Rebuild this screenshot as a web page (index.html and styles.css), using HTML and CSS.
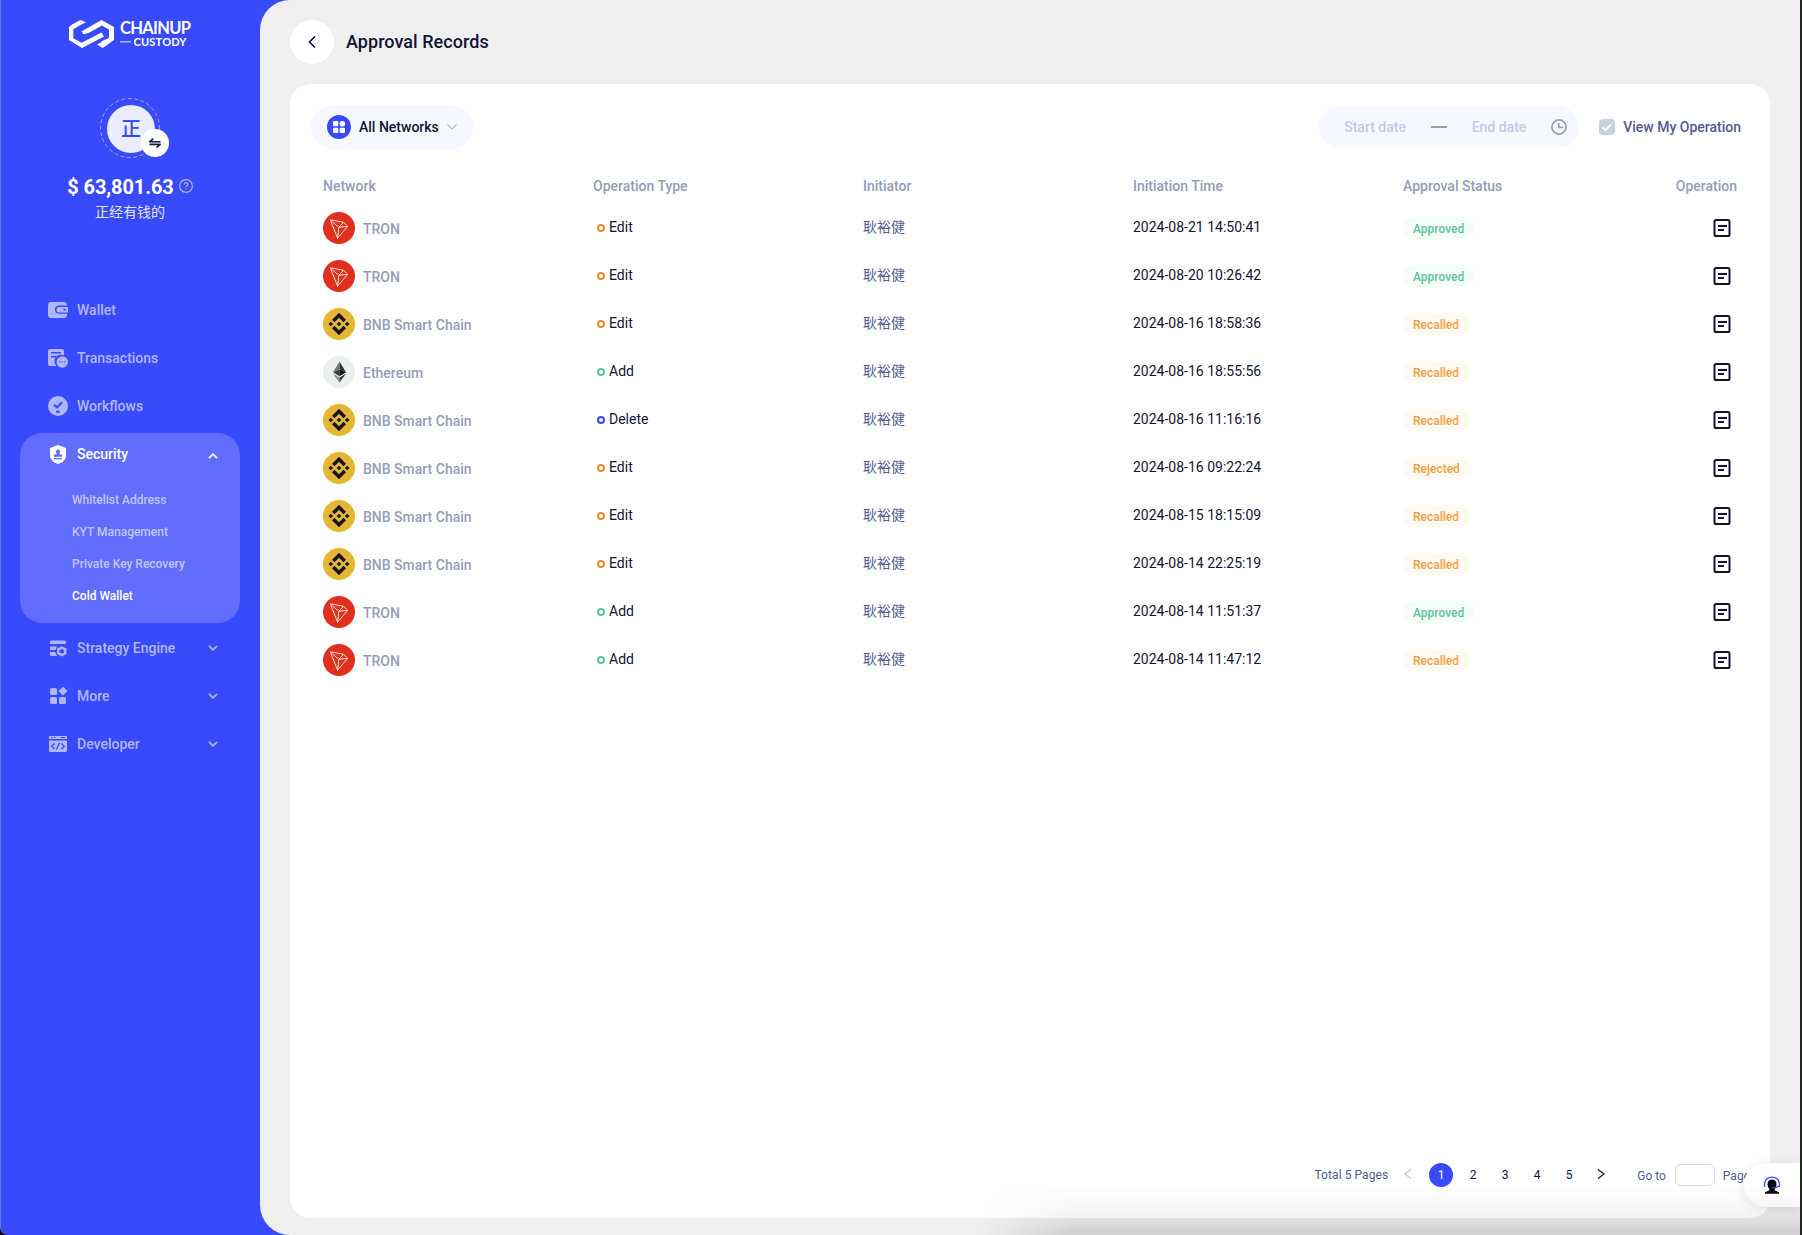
FILE: index.html
```html
<!DOCTYPE html>
<html lang="en">
<head>
<meta charset="utf-8">
<title>Approval Records</title>
<link rel="stylesheet" href="styles.css">
</head>
<body>
<svg class="defs" width="0" height="0" aria-hidden="true">
  <symbol id="tron" viewBox="0 0 32 32"><circle cx="16" cy="16" r="16" fill="#e1301e"/><path d="M7.3 7.8 20.6 10.3 24.7 14.3 14.6 26.2ZM7.3 7.8 15.8 15.4 14.6 26.2M15.8 15.4 20.6 10.3M15.8 15.4 24.7 14.3" fill="none" stroke="#fbe0dd" stroke-width="1" stroke-linejoin="round"/></symbol>
  <symbol id="bnb" viewBox="0 0 32 32"><circle cx="16" cy="16" r="16" fill="#e3b733"/><g fill="#16171a"><path d="M16 4.8 23 11.8 20.5 14.3 16 9.8 11.5 14.3 9 11.8ZM16 27.2 23 20.2 20.5 17.7 16 22.2 11.5 17.7 9 20.2ZM16 13.7 18.3 16 16 18.3 13.7 16ZM7.8 13.7 10.1 16 7.8 18.3 5.5 16ZM24.2 13.7 26.5 16 24.2 18.3 21.9 16Z"/></g></symbol>
  <symbol id="eth" viewBox="0 0 32 32"><circle cx="16" cy="16" r="16" fill="#eceff0"/><path d="M16.5 5.5 10 16.3 16.5 13.4Z" fill="#777"/><path d="M16.5 5.5 23 16.3 16.5 13.4Z" fill="#333"/><path d="M10 16.3 16.5 13.4V20.2Z" fill="#393939"/><path d="M23 16.3 16.5 13.4V20.2Z" fill="#141414"/><path d="M10 17.8 16.5 21.6V26.5Z" fill="#888"/><path d="M23 17.8 16.5 21.6V26.5Z" fill="#3c3c3b"/></symbol>
  <symbol id="doc" viewBox="0 0 18 18"><rect x="1.5" y="1" width="15" height="16" rx="1.6" fill="none" stroke="#131337" stroke-width="2"/><path d="M5 7h9M5 11h6" stroke="#131337" stroke-width="2"/></symbol>
  <symbol id="down" viewBox="0 0 10 6"><path d="M1 .8 5 4.8 9 .8" fill="none" stroke="currentColor" stroke-width="1.8"/></symbol>
</svg>
<div class="app">
  <aside class="sidebar">
    <svg class="logo" width="124" height="30" viewBox="0 0 124 30" fill="#fff">
      <path d="M4.5 5.2 10 2.3 15 4.5 5.3 10.2V19.2L13.5 23.7 33.5 13.5 36 17.5 14 29 1 21V8Z"/>
      <path d="M13 1 18 3.5 15 4.8 9.5 2.3Z"/>
      <path d="M13.5 12.5 33.5 1 46 8V21L39.5 25.5 33 22.5 41 19V10.5L34 6.5 20.5 14 15.5 15.2Z"/>
      <path d="M29 25.5 35 22.5 40 25.5 34.5 29Z"/>
      <text class="logo-name" x="52" y="15" textLength="71">CHAINUP</text>
      <path d="M52 22h11v1.500H52Z" opacity=".6"/>
      <text class="logo-sub" x="65.500" y="27" textLength="53">CUSTODY</text>
    </svg>
    <div class="avatar">
      <svg class="ring" width="60" height="60"><circle cx="30" cy="30" r="29.500" fill="none" stroke="#a5adff" stroke-dasharray="4 2.500"/></svg>
      <span class="face">正</span>
      <span class="swap"><svg width="12" height="10" viewBox="0 0 12 10"><path d="M0 3.800h11.500M4.300 .600.800 3.800M.500 6.400H11.800M7.500 9.400 11.300 6.400" fill="none" stroke="#171a3a" stroke-width="1.600"/></svg></span>
    </div>
    <div class="balance"><b>$ 63,801.63</b><svg width="14" height="14" viewBox="0 0 14 14" fill="none" stroke="#b3b5d6" stroke-width="1.200"><circle cx="7" cy="7" r="6.400"/><path d="M5.200 5.600C5.200 3 8.900 3.100 8.900 5.400 8.900 6.700 7 6.700 7 8.300M7 9.400v1.200"/></svg></div>
    <div class="owner">正经有钱的</div>
    <nav class="menu">
      <a class="item"><svg width="20" height="18" viewBox="0 0 20 18"><path fill="currentColor" fill-rule="evenodd" d="M3 1H16Q19 1 19 4.500H11A4 4 0 0 0 11 12.800H19V14Q19 17 16 17H3Q0 17 0 14V4Q0 1 3 1ZM11 6H20V11.400H11Q8.500 11.400 8.500 8.700 8.500 6 11 6ZM15.500 7.800V9.800H17.500V7.800Z"/></svg>Wallet</a>
      <a class="item"><svg width="20" height="20" viewBox="0 0 20 20"><path fill="currentColor" fill-rule="evenodd" d="M2 1H14Q16 1 16 3V7.500A6.500 6.500 0 0 0 8.500 18H2Q0 18 0 16V3Q0 1 2 1ZM3 4V5.500H13V4ZM3 8V9.500H8.500V8Z"/><circle cx="14.300" cy="14" r="5.700" fill="currentColor"/><path d="M11 14h1.500M13.500 14h1.500M16 14h1.500" stroke="#3949fc"/></svg>Transactions</a>
      <a class="item"><svg width="20" height="20" viewBox="0 0 20 20"><circle cx="10" cy="10" r="10" fill="currentColor"/><path d="M6 8.500 9 11.500 14 6.200M8 15.700h3.800" fill="none" stroke="#3949fc" stroke-width="2"/></svg>Workflows</a>
      <div class="group">
        <a class="item on"><svg width="20" height="20" viewBox="0 0 20 20"><path fill="currentColor" d="M10 1 18 4V12Q18 17 10 20 2 17 2 12V4Z"/><path fill="#5f6dfd" d="M10 5.500a2 2 0 0 1 1.500 3.400V10.500h2.500V12.800H6V10.500H8.500V8.900A2 2 0 0 1 10 5.500ZM6 14h8v1.300H6Z"/></svg>Security<svg class="caret up" width="10" height="6"><use href="#down"/></svg></a>
        <div class="sub"><a>Whitelist Address</a><a>KYT Management</a><a>Private Key Recovery</a><a class="on">Cold Wallet</a></div>
      </div>
      <a class="item"><svg width="20" height="20" viewBox="0 0 20 20"><path fill="currentColor" d="M3.500 2.500H16.500Q18 2.500 18 4V6H2V4Q2 2.500 3.500 2.500ZM2 8.500H9L7.500 12H2ZM2 14H7L9 18H3.500Q2 18 2 16.500Z"/><path fill="none" stroke="currentColor" stroke-width="2.600" d="M13.800 9.600 17.200 11.300V15.300L13.800 17.100 10.300 15.300V11.300Z"/></svg>Strategy Engine<svg class="caret" width="10" height="6"><use href="#down"/></svg></a>
      <a class="item"><svg width="20" height="20" viewBox="0 0 20 20" fill="currentColor"><rect x="2" y="2" width="7" height="7" rx="1.500"/><rect x="2" y="11" width="7" height="7" rx="1.500"/><rect x="11" y="11" width="7" height="7" rx="1.500"/><path d="M15 .500 19.500 5 15 9.500 10.500 5Z"/></svg>More<svg class="caret" width="10" height="6"><use href="#down"/></svg></a>
      <a class="item"><svg width="20" height="20" viewBox="0 0 20 20"><path fill="currentColor" fill-rule="evenodd" d="M2 2H18Q19 2 19 3V5H1V3Q1 2 2 2ZM1 6.500H19V16.500Q19 18 17.500 18H2.500Q1 18 1 16.500ZM3 3V4H4.500V3ZM6 3V4H7.500V3ZM13 3V4H17V3Z"/><path d="M6.500 9.500 3.800 12.200 6.500 15M13.500 9.500 16.200 12.200 13.500 15M11.500 8.800 8.500 15.600" fill="none" stroke="#3949fc" stroke-width="1.300"/></svg>Developer<svg class="caret" width="10" height="6"><use href="#down"/></svg></a>
    </nav>
  </aside>
  <main class="main">
    <header class="head"><span class="back"><svg width="8" height="12" viewBox="0 0 8 12"><path d="M7 .500 1.500 6 7 11.500" fill="none" stroke="#131337" stroke-width="1.600"/></svg></span><h1>Approval Records</h1></header>
    <section class="card">
      <div class="filters">
        <div class="network"><svg width="24" height="24" viewBox="0 0 24 24"><circle cx="12" cy="12" r="12" fill="#3949fc"/><g fill="#fff"><rect x="6" y="6" width="5.300" height="5.300" rx="1"/><rect x="6" y="12.700" width="5.300" height="5.300" rx="1"/><rect x="12.700" y="12.700" width="5.300" height="5.300" rx="1"/><circle cx="15.300" cy="8.700" r="2.800"/></g></svg><span>All Networks</span><svg class="thin" width="10" height="6" viewBox="0 0 10 6"><path d="M.500.500 5 5 9.500.500" fill="none" stroke="#b9bcc8" stroke-width="1.200"/></svg></div>
        <div class="dates"><span>Start date</span><i></i><span>End date</span><svg width="16" height="16" viewBox="0 0 16 16" fill="none" stroke="#969cb7" stroke-width="1.700"><circle cx="8" cy="8" r="7.100"/><path d="M7.800 4V8.300H12"/></svg></div>
        <label class="mine"><svg width="16" height="16" viewBox="0 0 16 16"><rect width="16" height="16" rx="4" fill="#cbd0df"/><path d="M3.500 8.300 6.500 11.200 12 5.400" fill="none" stroke="#fff" stroke-width="2"/></svg>View My Operation</label>
      </div>
      <div class="table">
        <div class="row th"><span>Network</span><span>Operation Type</span><span>Initiator</span><span>Initiation Time</span><span>Approval Status</span><span class="last">Operation</span></div>
        <div class="row"><span class="net"><svg><use href="#tron"/></svg><span>TRON</span></span><span class="op edit">Edit</span><span class="who">耿裕健</span><span class="time">2024-08-21 14:50:41</span><span class="st"><em class="ok">Approved</em></span><svg class="doc"><use href="#doc"/></svg></div>
        <div class="row"><span class="net"><svg><use href="#tron"/></svg><span>TRON</span></span><span class="op edit">Edit</span><span class="who">耿裕健</span><span class="time">2024-08-20 10:26:42</span><span class="st"><em class="ok">Approved</em></span><svg class="doc"><use href="#doc"/></svg></div>
        <div class="row"><span class="net"><svg><use href="#bnb"/></svg><span>BNB Smart Chain</span></span><span class="op edit">Edit</span><span class="who">耿裕健</span><span class="time">2024-08-16 18:58:36</span><span class="st"><em>Recalled</em></span><svg class="doc"><use href="#doc"/></svg></div>
        <div class="row"><span class="net"><svg><use href="#eth"/></svg><span>Ethereum</span></span><span class="op add">Add</span><span class="who">耿裕健</span><span class="time">2024-08-16 18:55:56</span><span class="st"><em>Recalled</em></span><svg class="doc"><use href="#doc"/></svg></div>
        <div class="row"><span class="net"><svg><use href="#bnb"/></svg><span>BNB Smart Chain</span></span><span class="op del">Delete</span><span class="who">耿裕健</span><span class="time">2024-08-16 11:16:16</span><span class="st"><em>Recalled</em></span><svg class="doc"><use href="#doc"/></svg></div>
        <div class="row"><span class="net"><svg><use href="#bnb"/></svg><span>BNB Smart Chain</span></span><span class="op edit">Edit</span><span class="who">耿裕健</span><span class="time">2024-08-16 09:22:24</span><span class="st"><em>Rejected</em></span><svg class="doc"><use href="#doc"/></svg></div>
        <div class="row"><span class="net"><svg><use href="#bnb"/></svg><span>BNB Smart Chain</span></span><span class="op edit">Edit</span><span class="who">耿裕健</span><span class="time">2024-08-15 18:15:09</span><span class="st"><em>Recalled</em></span><svg class="doc"><use href="#doc"/></svg></div>
        <div class="row"><span class="net"><svg><use href="#bnb"/></svg><span>BNB Smart Chain</span></span><span class="op edit">Edit</span><span class="who">耿裕健</span><span class="time">2024-08-14 22:25:19</span><span class="st"><em>Recalled</em></span><svg class="doc"><use href="#doc"/></svg></div>
        <div class="row"><span class="net"><svg><use href="#tron"/></svg><span>TRON</span></span><span class="op add">Add</span><span class="who">耿裕健</span><span class="time">2024-08-14 11:51:37</span><span class="st"><em class="ok">Approved</em></span><svg class="doc"><use href="#doc"/></svg></div>
        <div class="row"><span class="net"><svg><use href="#tron"/></svg><span>TRON</span></span><span class="op add">Add</span><span class="who">耿裕健</span><span class="time">2024-08-14 11:47:12</span><span class="st"><em>Recalled</em></span><svg class="doc"><use href="#doc"/></svg></div>
      </div>
      <footer class="pager">
        <span class="total">Total 5 Pages</span>
        <svg class="prev" width="8" height="10" viewBox="0 0 8 10"><path d="M7 .500 1 5 7 9.500" fill="none" stroke="#bfbfbf" stroke-width="1.100"/></svg>
        <a class="cur">1</a><a>2</a><a>3</a><a>4</a><a>5</a>
        <svg class="next" width="8" height="10" viewBox="0 0 8 10"><path d="M1 .500 7 5 1 9.500" fill="none" stroke="#131337" stroke-width="1.300"/></svg>
        <span class="goto">Go to</span><span class="num"></span><span class="goto">Page</span>
      </footer>
    </section>
  </main>
  <div class="support"><svg width="18" height="18" viewBox="0 0 18 18"><path d="M1.500 11V8Q2.500 1.200 9 1.200T16.500 8V11" fill="none" stroke="#3949fc" stroke-width="1.300"/><path d="M9 3.500Q13.500 3.500 13.500 8.500 13 12.500 11.500 13L12 14.500 16 16.200V17.700H2V16.200L6 14.500 6.500 13Q4.500 11.500 4.500 8.500 4.500 3.500 9 3.500Z" fill="#0b0c12"/><path d="M9 11.500Q13.500 12.500 15.500 9.800" fill="none" stroke="#3949fc" stroke-width="1.200"/></svg></div>
  <div class="haze"></div>
</div>
</body>
</html>
```
FILE: styles.css
```css
* { box-sizing: border-box; }
html { background: #000; }
body { margin: 0; font: 500 14px/20px Roboto, "Noto Sans CJK SC", sans-serif; color: #131337; }
.defs { position: absolute; }
svg { flex: none; display: block; }
.app { position: relative; display: flex; width: 1802px; height: 1235px; overflow: hidden; background: #3949fc; border-left: 1px solid #6672fb; border-right: 2px solid #1d2b1f; border-radius: 0 0 0 8px; }

.sidebar { width: 260px; margin-left: -1px; height: 1235px; flex: none; display: flex; flex-direction: column; align-items: center; }
.logo { margin-top: 19px; }
.logo-name { font: 700 16.5px Lato, sans-serif; }
.logo-sub { font: 700 11px Lato, sans-serif; }
.avatar { position: relative; width: 60px; height: 60px; margin-top: 49px; display: flex; align-items: center; justify-content: center; }
.ring { position: absolute; inset: 0; }
.face { width: 48px; height: 48px; border-radius: 50%; background: #ebedff; color: #3949fc; font-size: 20px; line-height: 48px; text-align: center; margin: 2px 0 0 2px; }
.swap { position: absolute; left: 41px; top: 31px; width: 28px; height: 28px; border-radius: 50%; background: #fff; display: flex; align-items: center; justify-content: center; }
.balance { display: flex; align-items: center; gap: 5px; margin-top: 16px; height: 26px; color: #fff; font-size: 20px; letter-spacing: -.1px; }
.balance b { font-weight: 700; }
.balance svg { margin-bottom: 2px; }
.owner { margin-top: 2px; color: #e1e4ff; font-weight: 400; }
.menu { margin-top: 64px; width: 220px; }
.item { display: flex; align-items: center; height: 48px; padding: 0 22px 0 28px; gap: 9px; color: #afb6fe; }
.item .caret { margin-left: auto; }
.item.on, .sub .on { color: #fff; }
.group { margin: 3px 0 1px; height: 190px; border-radius: 22px; background: #616dfd; }
.group .item { height: 42px; }
.item .up { transform: rotate(180deg); margin-top: 3px; }
.sub { display: flex; flex-direction: column; padding: 9px 0 0 52px; font-size: 12px; line-height: 32px; color: #c0c5fe; }

.main { flex: 1; background: #efefef; border-radius: 30px 0 0 30px; padding: 20px 30px 17px; display: flex; flex-direction: column; }
.head { display: flex; align-items: center; gap: 12px; height: 44px; }
.back { width: 44px; height: 44px; padding-right: 1px; border-radius: 50%; background: #fff; display: flex; align-items: center; justify-content: center; }
h1 { margin: 0; font-size: 18px; font-weight: 500; letter-spacing: .05px; }
.card { flex: 1; margin-top: 20px; background: #fff; border-radius: 20px; padding: 21px 29px 31px 21px; display: flex; flex-direction: column; }
.filters { display: flex; align-items: center; height: 44px; }
.network { display: flex; align-items: center; width: 162px; height: 44px; padding: 0 16px; border-radius: 22px; background: #f5f9ff; gap: 8px; }
.network .thin { margin-left: auto; }
.dates { margin-left: auto; display: flex; align-items: center; width: 260px; height: 42px; padding: 0 12px 0 25px; border-radius: 21px; background: #f5f9ff; color: #c4c9e8; justify-content: space-between; }
.dates i { width: 16px; height: 2px; background: #969cb7; }
.mine { display: flex; align-items: center; gap: 8px; margin-left: 20px; color: #525a90; }

.table { padding: 25px 4px 0 12px; }
.row { display: grid; grid-template-columns: repeat(5, 270px) 1fr; align-items: center; height: 48px; }
.th { height: 24px; margin-bottom: 6px; color: #969cb7; }
.last { text-align: right; }
.net { display: flex; align-items: center; gap: 8px; color: #969cb7; }
.net span { padding-top: 2px; }
.net svg { width: 32px; height: 32px; }
.op { display: flex; align-items: center; gap: 4px; padding-left: 4px; }
.op::before { content: ""; box-sizing: border-box; width: 8px; height: 8px; margin-top: 2px; border: 2px solid #ee8d20; border-radius: 50%; }
.op.add::before { border-color: #5cc698; }
.op.del::before { border-color: #3949fc; }
.op, .who, .time { padding-bottom: 2px; font-weight: 400; }
.who { color: #525a90; }
.st { display: flex; }
em { font: 500 12px/20px Roboto, sans-serif; height: 22px; padding: 2px 10px 0; border-radius: 11px; color: #f0a03a; background: #fff9f5; }
em.ok { color: #5cc698; background: #f4fcf9; }
.doc { width: 18px; height: 18px; justify-self: end; margin-right: 6px; }

.pager { margin: auto -9px 0 0; display: flex; align-items: center; justify-content: flex-end; height: 24px; font-size: 12px; color: #525a90; font-weight: 400; }
.pager a { width: 24px; height: 24px; line-height: 25px; border-radius: 50%; text-align: center; color: #131337; margin-right: 8px; }
.pager .cur { background: #3949fc; color: #fff; }
.total { letter-spacing: .07px; }
.goto { padding-top: 1px; }
.prev { margin: 0 17px 2px 16px; }
.next { margin: 0 32px 2px 8px; }
.num { width: 40px; height: 22px; border: 1px solid #d9d9d9; border-radius: 6px; margin: 0 8px 0 9px; }

.support { position: absolute; right: 0; top: 1163px; width: 56px; height: 44px; background: #fff; border-radius: 22px 0 0 22px; box-shadow: 0 2px 12px rgba(0,0,0,.1); padding: 13px 0 0 19px; }
.haze { position: absolute; left: 980px; right: 0; bottom: 0; height: 50px; background: linear-gradient(to bottom, rgba(0,0,0,0), rgba(0,0,0,.04) 60%, rgba(0,0,0,.13)); -webkit-mask-image: linear-gradient(to right, transparent, #000 90px); mask-image: linear-gradient(to right, transparent, #000 90px); }
```
